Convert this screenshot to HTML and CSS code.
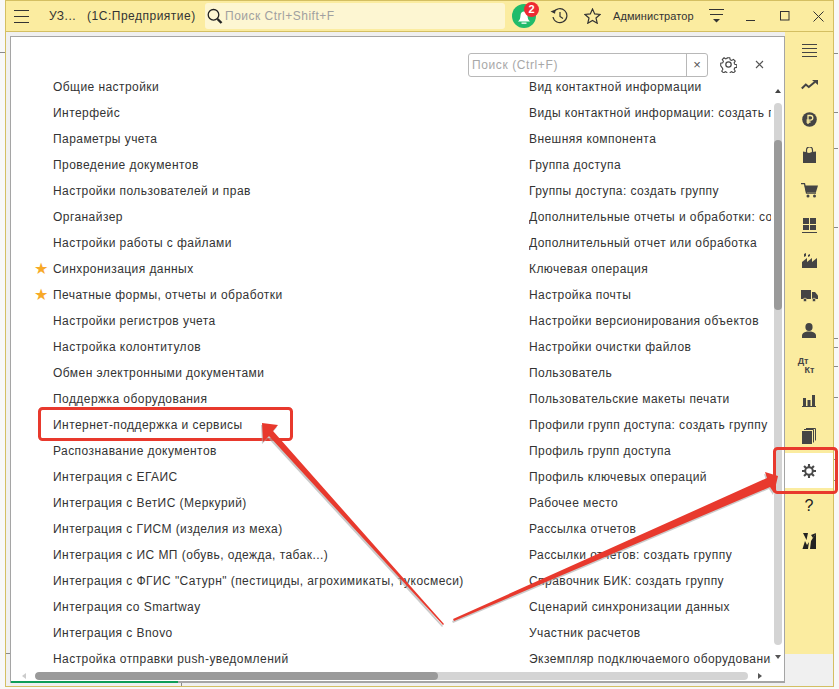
FILE: index.html
```html
<!DOCTYPE html>
<html lang="ru">
<head>
<meta charset="utf-8">
<title>1С:Предприятие</title>
<link rel="stylesheet" href="styles.css">
</head>
<body>
<div class="window">
  <header class="topbar">
    <button class="tb-btn burger" aria-label="Меню"><svg width="15" height="13" viewBox="0 0 15 13"><path d="M0 .5h15M0 6.500h15M0 12.500h15" stroke="#333" fill="none"/></svg></button>
    <div class="app-title"><span>УЗ...</span><span>(1С:Предприятие)</span></div>
    <div class="global-search">
      <svg width="16" height="17" viewBox="0 0 16 17"><circle cx="6.500" cy="6.800" r="5.300" fill="none" stroke="#222" stroke-width="1.300"/><path d="M10.500 11l4 4" stroke="#222" stroke-width="2.400"/></svg>
      <span>Поиск Ctrl+Shift+F</span>
    </div>
    <div class="bell">
      <svg width="24" height="24" viewBox="0 0 24 24"><circle cx="12" cy="12" r="12" fill="#21bb6b"/><path d="M6 17.500c2-1.500 2.300-3.500 2.500-6 .2-2.500 1.500-4 3.500-4s3.300 1.500 3.500 4c.2 2.500.5 4.500 2.500 6z" fill="#fff"/><path d="M9.500 18.500h5v1.300h-5z" fill="#fff"/></svg>
      <span class="badge">2</span>
    </div>
    <svg class="tb-icon hist" width="18" height="16" viewBox="0 0 18 16"><path d="M3.600 4.500A7 7 0 1 1 3 9" fill="none" stroke="#333" stroke-width="1.200"/><path d="M.5 3.500l4.500 2.200 .6-4.200z" fill="#333"/><path d="M10 4v4.500l3 2" fill="none" stroke="#333" stroke-width="1.200"/></svg>
    <svg class="tb-icon star" width="17" height="16" viewBox="0 0 17 16"><path d="M8.500 1l2.200 4.900 5.300.6-4 3.500 1.200 5.200-4.700-2.700-4.700 2.700L5 10 1 6.500l5.300-.6z" fill="none" stroke="#333" stroke-width="1.200"/></svg>
    <span class="user">Администратор</span>
    <svg class="tb-icon filter" width="15" height="14" viewBox="0 0 15 14"><path d="M0 .5h15M1 5.500h13" stroke="#333" fill="none"/><path d="M4 10h7l-3.500 3.500z" fill="#333"/></svg>
    <svg class="tb-icon min" width="10" height="10" viewBox="0 0 10 10"><path d="M0 9.500h9" stroke="#333" fill="none"/></svg>
    <svg class="tb-icon max" width="10" height="10" viewBox="0 0 10 10"><rect x=".5" y=".5" width="8.500" height="8.500" fill="none" stroke="#333" stroke-width="1"/></svg>
    <svg class="tb-icon close" width="11" height="11" viewBox="0 0 11 11"><path d="M.5.500l10 10M10.500.500l-10 10" stroke="#333" fill="none"/></svg>
  </header>

  <div class="workspace">
    <main class="panel">
      <div class="panel-tools">
        <div class="search-box">
          <span class="search-text">Поиск (Ctrl+F)</span>
          <span class="search-clear">×</span>
        </div>
        <svg class="gear-tool" width="17" height="17" viewBox="0 0 24 24"><g fill="none" stroke="#444" stroke-width="1.700"><path d="M10 1.500h4l.7 3.200 2.300 1 2.800-1.800 2.800 2.800-1.800 2.800 1 2.300 3.200.7v4l-3.200.7-1 2.300 1.800 2.800-2.800 2.800-2.800-1.800-2.300 1-.7 3.200h-4l-.7-3.200-2.300-1-2.800 1.800-2.800-2.800 1.800-2.800-1-2.300L-.2 14v-4l3.200-.7 1-2.300-1.800-2.800L5 1.400l2.800 1.800 2.300-1z" transform="translate(1.200 1.200) scale(.9)"/><circle cx="12" cy="12" r="3.800"/></g></svg>
        <svg class="close-tool" width="9" height="9" viewBox="0 0 9 9"><path d="M1 1l7 7M8 1L1 8" stroke="#555" fill="none" stroke-width="1.100"/></svg>
      </div>
      <div class="lists">
        <ul class="col col-a">
          <li>Общие настройки</li>
          <li>Интерфейс</li>
          <li>Параметры учета</li>
          <li>Проведение документов</li>
          <li>Настройки пользователей и прав</li>
          <li>Органайзер</li>
          <li>Настройки работы с файлами</li>
          <li class="fav">Синхронизация данных</li>
          <li class="fav">Печатные формы, отчеты и обработки</li>
          <li>Настройки регистров учета</li>
          <li>Настройка колонтитулов</li>
          <li>Обмен электронными документами</li>
          <li>Поддержка оборудования</li>
          <li>Интернет-поддержка и сервисы</li>
          <li>Распознавание документов</li>
          <li>Интеграция с ЕГАИС</li>
          <li>Интеграция с ВетИС (Меркурий)</li>
          <li>Интеграция с ГИСМ (изделия из меха)</li>
          <li>Интеграция с ИС МП (обувь, одежда, табак...)</li>
          <li>Интеграция с ФГИС "Сатурн" (пестициды, агрохимикаты, тукосмеси)</li>
          <li>Интеграция со Smartway</li>
          <li>Интеграция с Bnovo</li>
          <li>Настройка отправки push-уведомлений</li>
        </ul>
        <ul class="col col-b">
          <li>Вид контактной информации</li>
          <li>Виды контактной информации: создать группу</li>
          <li>Внешняя компонента</li>
          <li>Группа доступа</li>
          <li>Группы доступа: создать группу</li>
          <li>Дополнительные отчеты и обработки: создать группу</li>
          <li>Дополнительный отчет или обработка</li>
          <li>Ключевая операция</li>
          <li>Настройка почты</li>
          <li>Настройки версионирования объектов</li>
          <li>Настройки очистки файлов</li>
          <li>Пользователь</li>
          <li>Пользовательские макеты печати</li>
          <li>Профили групп доступа: создать группу</li>
          <li>Профиль групп доступа</li>
          <li>Профиль ключевых операций</li>
          <li>Рабочее место</li>
          <li>Рассылка отчетов</li>
          <li>Рассылки отчетов: создать группу</li>
          <li>Справочник БИК: создать группу</li>
          <li>Сценарий синхронизации данных</li>
          <li>Участник расчетов</li>
          <li>Экземпляр подключаемого оборудования</li>
        </ul>
        <div class="vscroll">
          <span class="arr-up"></span>
          <div class="v-track"><div class="v-pre"></div><div class="v-thumb"></div></div>
          <span class="arr-down"></span>
        </div>
      </div>
      <div class="hscroll">
        <span class="arr-left"></span>
        <div class="h-track"><div class="h-thumb"></div></div>
        <span class="arr-right"></span>
      </div>
      <div class="progress"><div class="progress-fill"></div></div>
    </main>

    <aside class="sidebar">
      <div class="side-item"><svg width="15" height="14" viewBox="0 0 15 14"><path d="M0 .5h15M0 4.500h15M0 8.500h15M0 12.500h15" stroke="#444" fill="none"/></svg></div>
      <div class="side-item up1"><svg width="17" height="10" viewBox="0 0 17 10"><path d="M.8 8.500l4-4 3 2.500 6-5" fill="none" stroke="#444" stroke-width="2"/><path d="M11 0h6v5z" fill="#444"/></svg></div>
      <div class="side-item up1"><svg width="15" height="15" viewBox="0 0 15 15"><circle cx="7.500" cy="7.500" r="7.300" fill="#444"/><path d="M6 12V3.500h2.500a2.300 2.300 0 0 1 0 4.600H4.500M4.500 10h4" fill="none" stroke="#fbeda0" stroke-width="1.300"/></svg></div>
      <div class="side-item up1"><svg width="13" height="16" viewBox="0 0 13 16"><path d="M0 4.500l2.500.5 3.500 1 3-1 4-.5V16H0z" fill="#444"/><path d="M3.500 7V3a3 3 0 0 1 6 0v4" fill="none" stroke="#444" stroke-width="1.200"/></svg></div>
      <div class="side-item"><svg width="17" height="15" viewBox="0 0 17 15"><path d="M0 .7h3.500l2 9.300H15" fill="none" stroke="#444" stroke-width="1.300"/><path d="M3.500 2.500H17L15 9H5z" fill="#444"/><circle cx="7" cy="13" r="1.500" fill="#444"/><circle cx="13.500" cy="13" r="1.500" fill="#444"/></svg></div>
      <div class="side-item"><svg width="15" height="15" viewBox="0 0 15 15"><path d="M1 0h6v6H1zM8 0h6v6H8zM1 7h6v5H1zM8 7h6v5H8z" fill="#444"/><path d="M0 14h15v1H0z" fill="#444"/></svg></div>
      <div class="side-item"><svg width="15" height="15" viewBox="0 0 15 15"><path d="M0 15V9l5-4v4l5-4v4l5-4v10z" fill="#444"/><path d="M2 1l2-1v3L2 4zM6 2l2-1v2L6 4z" fill="#444"/></svg></div>
      <div class="side-item"><svg width="17" height="12" viewBox="0 0 17 12"><path d="M0 0h10v9H0z" fill="#444"/><path d="M11 2h3l3 3.500V9h-6z" fill="#444"/><circle cx="4" cy="10" r="1.800" fill="#444" stroke="#fbeda0" stroke-width=".7"/><circle cx="13" cy="10" r="1.800" fill="#444" stroke="#fbeda0" stroke-width=".7"/></svg></div>
      <div class="side-item"><svg width="14" height="15" viewBox="0 0 14 15"><ellipse cx="7" cy="4" rx="3.600" ry="4" fill="#444"/><path d="M0 15v-2.500C0 10 3 9 5 8.500h4C11 9 14 10 14 12.500V15z" fill="#444"/></svg></div>
      <div class="side-item dtkt"><span class="dt">Дт</span><span class="kt">Кт</span></div>
      <div class="side-item"><svg width="14" height="13" viewBox="0 0 14 13"><path d="M1 4h3v8H1zM5.500 6h3v6h-3zM10 1h3v11h-3z" fill="#444"/><path d="M0 12.500h14" stroke="#444" fill="none"/></svg></div>
      <div class="side-item"><svg width="14" height="16" viewBox="0 0 14 16"><path d="M0 3h10v13H0z" fill="#444"/><path d="M11.500 14.500V1.500H2M13.500 12.500V.5H4" fill="none" stroke="#444"/></svg></div>
      <div class="side-item active"><svg width="14" height="14" viewBox="0 0 24 24"><g fill="none" stroke="#4a4a4a"><circle cx="12" cy="12" r="6.500" stroke-width="3.400"/><path d="M12 0v5M12 19v5M0 12h5M19 12h5M3.500 3.500L7 7M17 17l3.500 3.500M20.500 3.500L17 7M7 17l-3.500 3.500" stroke-width="3.600"/></g></svg></div>
      <div class="side-item question">?</div>
      <div class="side-item"><svg width="16" height="16" viewBox="0 0 16 16"><path d="M2 0h5L5.500 7zM9 16l1-8 5-8v16zM1.500 16l2.500-8 2 4 2-3-1 7z" fill="#222"/><path d="M10 2l5-2-3 5z" fill="#222"/></svg></div>
    </aside>
  </div>
</div>

<svg class="annot" width="839" height="689" viewBox="0 0 839 689">
  <g stroke="#8a8a8a" fill="none">
    <path d="M0 52.500h5M6 653.500h4M181.500 683v3M834 53.500h4M834 112.500h4M834 148.500h4M834 227.500h4M834 338.500h4M834 347.500h4M834 366.500h4M834 397.500h4M834 459.500h4M834 480.500h4"/>
  </g>
  <g fill="none" stroke="#e8392d" stroke-width="3">
    <rect x="39.500" y="408.500" width="252" height="31" rx="3"/>
    <rect x="774.500" y="448.500" width="62" height="44" rx="3"/>
  </g>
  <g fill="#a8a8a8" opacity=".6" transform="translate(-1 2)">
    <path d="M262 423l16 2-5 6 171 193-1 1-174-189-6 6z"/>
    <path d="M778 476l-4 17-4-6-316 134-1-2 314-141-2-6z"/>
  </g>
  <g fill="#e8392d">
    <path d="M262 423l16 2-5 6 171 193-1 1-174-189-6 6z"/>
    <path d="M778 476l-4 17-4-6-316 134-1-2 314-141-2-6z"/>
  </g>
</svg>
</body>
</html>
```

FILE: styles.css
```css
* { box-sizing: border-box; }
html, body { margin: 0; padding: 0; }
body {
  width: 839px;
  height: 689px;
  overflow: hidden;
  background: #f8f8f8;
  font-family: "Liberation Sans", Arial, sans-serif;
  font-size: 12px;
  color: #333;
  position: relative;
}
.window {
  margin-left: 5px;
  width: 829px;
  height: 687px;
  border: 1px solid #d4bf62;
  background: #f0f0f0;
  display: flex;
  flex-direction: column;
}
.topbar {
  height: 31px;
  flex: none;
  background: #fbeca0;
  border-bottom: 1px solid #d4bf62;
  display: flex;
  align-items: center;
  position: relative;
}
.tb-btn { border: 0; background: none; padding: 0; display: flex; }
.burger { margin-left: 8px; }
.app-title { margin-left: 20px; display: flex; gap: 11px; letter-spacing: .5px; color: #333; white-space: nowrap; width: 156px; flex: none; }
.global-search {
  width: 300px;
  height: 26px;
  flex: none;
  border-radius: 3px;
  background: #fdf6d2;
  display: flex;
  align-items: center;
  padding-left: 2px;
  color: #a0a0a0;
  letter-spacing: .5px;
  gap: 2px;
}
.bell { position: relative; width: 24px; height: 24px; margin-left: 7px; flex: none; }
.badge {
  position: absolute; left: 12px; top: -2px; width: 15px; height: 15px; border-radius: 50%;
  background: #ee2a32; color: #fff; font-weight: bold; font-size: 11px; line-height: 15px; text-align: center;
}
.tb-icon { flex: none; }
.hist { margin-left: 14px; }
.star { margin-left: 16px; }
.user { margin-left: 12px; width: 81px; flex: none; font-size: 11px; letter-spacing: .1px; white-space: nowrap; }
.filter { margin-left: 15px; }
.min { margin-left: 22px; }
.max { margin-left: 24px; }
.close { margin-left: 23px; }

.workspace { flex: 1; min-height: 0; display: flex; padding: 4px 0 0 4px; align-items: flex-start; }
.panel {
  width: 775px;
  height: 647px;
  background: #fff;
  border: 1px solid #a5a5a5;
  border-bottom-width: 0;
  display: flex;
  flex-direction: column;
  flex: none;
}
.panel-tools { height: 37px; flex: none; display: flex; align-items: flex-start; padding: 16px 0 0 457px; }
.search-box {
  width: 240px; height: 24px; border: 1px solid #b8b8b8; border-radius: 3px; display: flex; align-items: center; flex: none;
}
.search-text { flex: 1; padding-left: 3px; color: #a8a8a8; letter-spacing: .6px; }
.search-clear { width: 21px; height: 100%; border-left: 1px solid #b8b8b8; text-align: center; line-height: 21px; color: #555; font-size: 13px; }
.gear-tool { margin: 3px 0 0 12px; flex: none; }
.close-tool { margin: 7px 0 0 18px; flex: none; }

.lists { flex: 1; min-height: 0; display: flex; overflow: hidden; }
.col { list-style: none; margin: 0; padding: 0; overflow: hidden; flex: none; }
.col-a { width: 518px; padding-left: 42px; }
.col-b { width: 242px; }
.col li { height: 26px; line-height: 26px; letter-spacing: .44px; white-space: nowrap; color: #333; }
.fav { position: relative; }
.fav::before {
  content: "★"; position: absolute; left: -19px; top: 0; color: #f7a928; font-size: 16px; letter-spacing: 0; font-family: "DejaVu Sans", sans-serif;
}
.vscroll { width: 13px; flex: none; display: flex; flex-direction: column; align-items: center; padding-left: 1px; }
.arr-up { width: 0; height: 0; border: 3.500px solid transparent; border-top: 0; border-bottom: 4px solid #444; margin-top: 15px; flex: none; }
.v-track { width: 8px; height: 542px; margin-top: 10px; background: #d4d4d4; border-radius: 4px; flex: none; overflow: hidden; }
.v-pre { height: 37px; }
.v-thumb { height: 170px; background: #9a9a9a; border-radius: 4px; }
.arr-down { width: 0; height: 0; border: 3.500px solid transparent; border-bottom: 0; border-top: 4px solid #555; margin-top: 10px; flex: none; }

.hscroll { height: 12px; flex: none; display: flex; align-items: center; padding-left: 11px; padding-top: 2px; }
.arr-left { width: 0; height: 0; border: 3.500px solid transparent; border-left: 0; border-right: 4px solid #ccc; flex: none; }
.h-track { width: 713px; height: 8px; margin-left: 9px; background: #d4d4d4; border-radius: 4px; overflow: hidden; flex: none; }
.h-thumb { width: 403px; height: 8px; background: #9a9a9a; border-radius: 4px; }
.arr-right { width: 0; height: 0; border: 3.500px solid transparent; border-right: 0; border-left: 4px solid #555; margin-left: 10px; flex: none; }
.progress { height: 2px; flex: none; background: #a5a5a5; }
.progress-fill { width: 167px; height: 2px; background: #0f9d58; }

.sidebar {
  width: 48px; height: 622px; flex: none; margin-top: -4px; background: #fbeca0;
  display: flex; flex-direction: column; padding-top: 1px;
}
.side-item { height: 35px; flex: none; display: flex; align-items: center; justify-content: center; }
.side-item.up1 { padding-bottom: 2px; }
.side-item.active { background: #fff; }
.question { font-size: 16px; color: #222; }
.dtkt { position: relative; font-size: 9px; font-weight: bold; color: #444; }
.dt { position: relative; left: -1px; top: -5px; }
.kt { position: relative; left: -5px; top: 4px; }

.annot { position: absolute; left: 0; top: 0; pointer-events: none; }
```
